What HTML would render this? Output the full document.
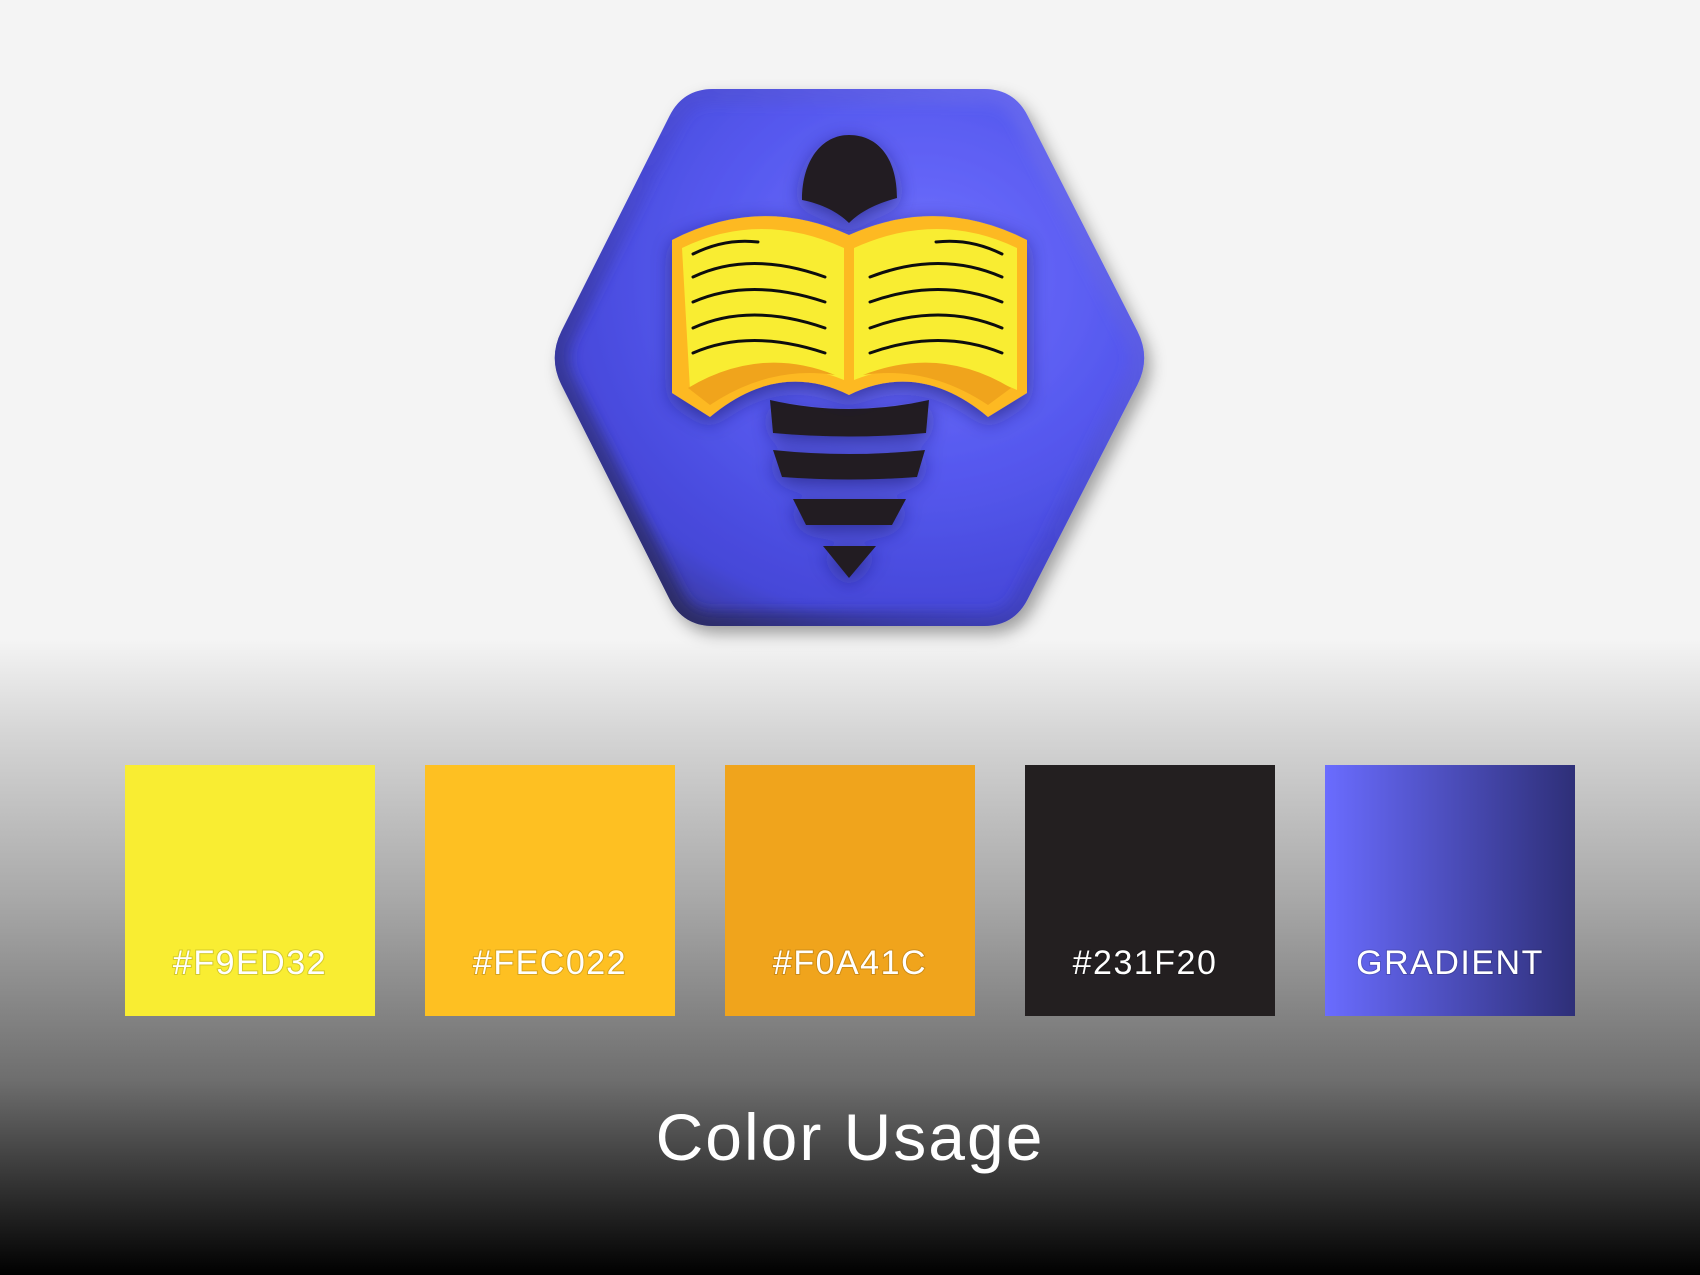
<!DOCTYPE html>
<html><head><style>
html,body{margin:0;padding:0;width:1700px;height:1275px;overflow:hidden}
body{background:linear-gradient(to bottom,#f4f4f4 0px,#f4f4f4 640px,#d6d6d6 730px,#a8a8a8 900px,#6e6e6e 1080px,#2a2a2a 1200px,#000 1275px)}
svg{position:absolute;left:0;top:0}
</style></head><body>
<svg width="1700" height="1275" viewBox="0 0 1700 1275" xmlns="http://www.w3.org/2000/svg">
<defs>
<radialGradient id="hx" cx="0.62" cy="0.35" r="0.75">
<stop offset="0" stop-color="#7070ff"/>
<stop offset="0.5" stop-color="#5558ee"/>
<stop offset="0.85" stop-color="#4547d8"/>
<stop offset="1" stop-color="#3a3a9a"/>
</radialGradient>
<linearGradient id="edge" x1="1" y1="0" x2="0" y2="1">
<stop offset="0" stop-color="#8a8aff" stop-opacity="0.5"/>
<stop offset="0.5" stop-color="#3c3cb0" stop-opacity="0.3"/>
<stop offset="1" stop-color="#22223a" stop-opacity="0.9"/>
</linearGradient>
<clipPath id="hc"><path id="hp" d="M561.5,331 L669.5,116 Q683,89 713,89 L984,89 Q1014,89 1027.6,115.7 L1137.4,331.3 Q1151,358 1137.4,384.7 L1027.6,599.3 Q1014,626 984,626 L713,626 Q683,626 669.5,599 L561.5,385 Q548,358 561.5,331Z"/></clipPath>
<linearGradient id="gr" x1="0" x2="1" y1="0" y2="0">
<stop offset="0" stop-color="#6a6cff"/><stop offset="1" stop-color="#2e2f78"/>
</linearGradient>
<filter id="sh" x="-20%" y="-20%" width="140%" height="140%"><feDropShadow dx="6" dy="8" stdDeviation="8" flood-color="#000" flood-opacity="0.35"/></filter>
<filter id="sh2" x="-20%" y="-20%" width="140%" height="140%"><feDropShadow dx="0" dy="6" stdDeviation="10" flood-color="#1a1a60" flood-opacity="0.6"/></filter>
<filter id="bl"><feGaussianBlur stdDeviation="6"/></filter>
</defs>
<path d="M561.5,331 L669.5,116 Q683,89 713,89 L984,89 Q1014,89 1027.6,115.7 L1137.4,331.3 Q1151,358 1137.4,384.7 L1027.6,599.3 Q1014,626 984,626 L713,626 Q683,626 669.5,599 L561.5,385 Q548,358 561.5,331Z" fill="url(#hx)" filter="url(#sh)"/>
<g clip-path="url(#hc)">
<path d="M561.5,331 L669.5,116 Q683,89 713,89 L984,89 Q1014,89 1027.6,115.7 L1137.4,331.3 Q1151,358 1137.4,384.7 L1027.6,599.3 Q1014,626 984,626 L713,626 Q683,626 669.5,599 L561.5,385 Q548,358 561.5,331Z" fill="none" stroke="url(#edge)" stroke-width="30" filter="url(#bl)"/>
</g>
<g filter="url(#sh2)" fill="#231f20">
<path d="M802,200 C802,160 822,135 849,135 C878,135 897,158 897,198 C875,204 860,212 849,223 C838,212 822,204 802,200Z"/>
<path d="M770,400 Q849,418 929,400 L926,433 Q849,440 773,433Z"/>
<path d="M773,450 Q849,458 925,450 L917,477 Q849,482 782,477Z"/>
<path d="M793,499 L906,499 L892,525 L806,525Z"/>
<path d="M823,546 L876,546 L849,578Z"/>
</g>
<g filter="url(#sh2)">
<path d="M672,240 Q760,195 849,235 Q938,195 1027,240 L1027,393 L988,417 Q920,360 849,395 Q778,360 710,417 L672,393Z" fill="#fdb922"/>
<path d="M682,248 Q760,210 844,248 L844,380 Q770,350 690,390Z" fill="#f9ed32"/>
<path d="M854,248 Q938,210 1017,248 L1017,390 Q930,350 854,380Z" fill="#f9ed32"/>
<path d="M688,388 Q760,345 835,375 Q770,365 710,405Z" fill="#f0a41c"/>
<path d="M1011,388 Q940,345 863,375 Q928,365 988,405Z" fill="#f0a41c"/>
<g fill="none" stroke="#111" stroke-width="3" stroke-linecap="round">
<path d="M693,254 Q725,238 758,242"/>
<path d="M693,277 Q750,250 825,277"/>
<path d="M693,302 Q750,277 825,302"/>
<path d="M693,328 Q750,302 825,328"/>
<path d="M693,353 Q750,328 825,353"/>
<path d="M936,242 Q970,238 1002,254"/>
<path d="M870,277 Q940,250 1002,277"/>
<path d="M870,302 Q940,277 1002,302"/>
<path d="M870,328 Q940,302 1002,328"/>
<path d="M870,353 Q940,328 1002,353"/>
</g>
</g>
<rect x="125" y="765" width="250" height="251" fill="#f9ed32"/>
<rect x="425" y="765" width="250" height="251" fill="#fec022"/>
<rect x="725" y="765" width="250" height="251" fill="#f0a41c"/>
<rect x="1025" y="765" width="250" height="251" fill="#231f20"/>
<rect x="1325" y="765" width="250" height="251" fill="url(#gr)"/>
<g font-family="Liberation Sans, sans-serif" font-size="34" fill="#fff" text-anchor="middle" letter-spacing="1.5" style="paint-order:stroke" stroke="rgba(0,0,0,0.15)" stroke-width="2">
<text x="250" y="974">#F9ED32</text>
<text x="550" y="974">#FEC022</text>
<text x="850" y="974">#F0A41C</text>
<text x="1145" y="974">#231F20</text>
<text x="1450" y="974">GRADIENT</text>
</g>
<text x="850" y="1160" font-family="Liberation Sans, sans-serif" font-size="66" fill="#fff" text-anchor="middle" letter-spacing="2">Color Usage</text>
</svg>
</body></html>
